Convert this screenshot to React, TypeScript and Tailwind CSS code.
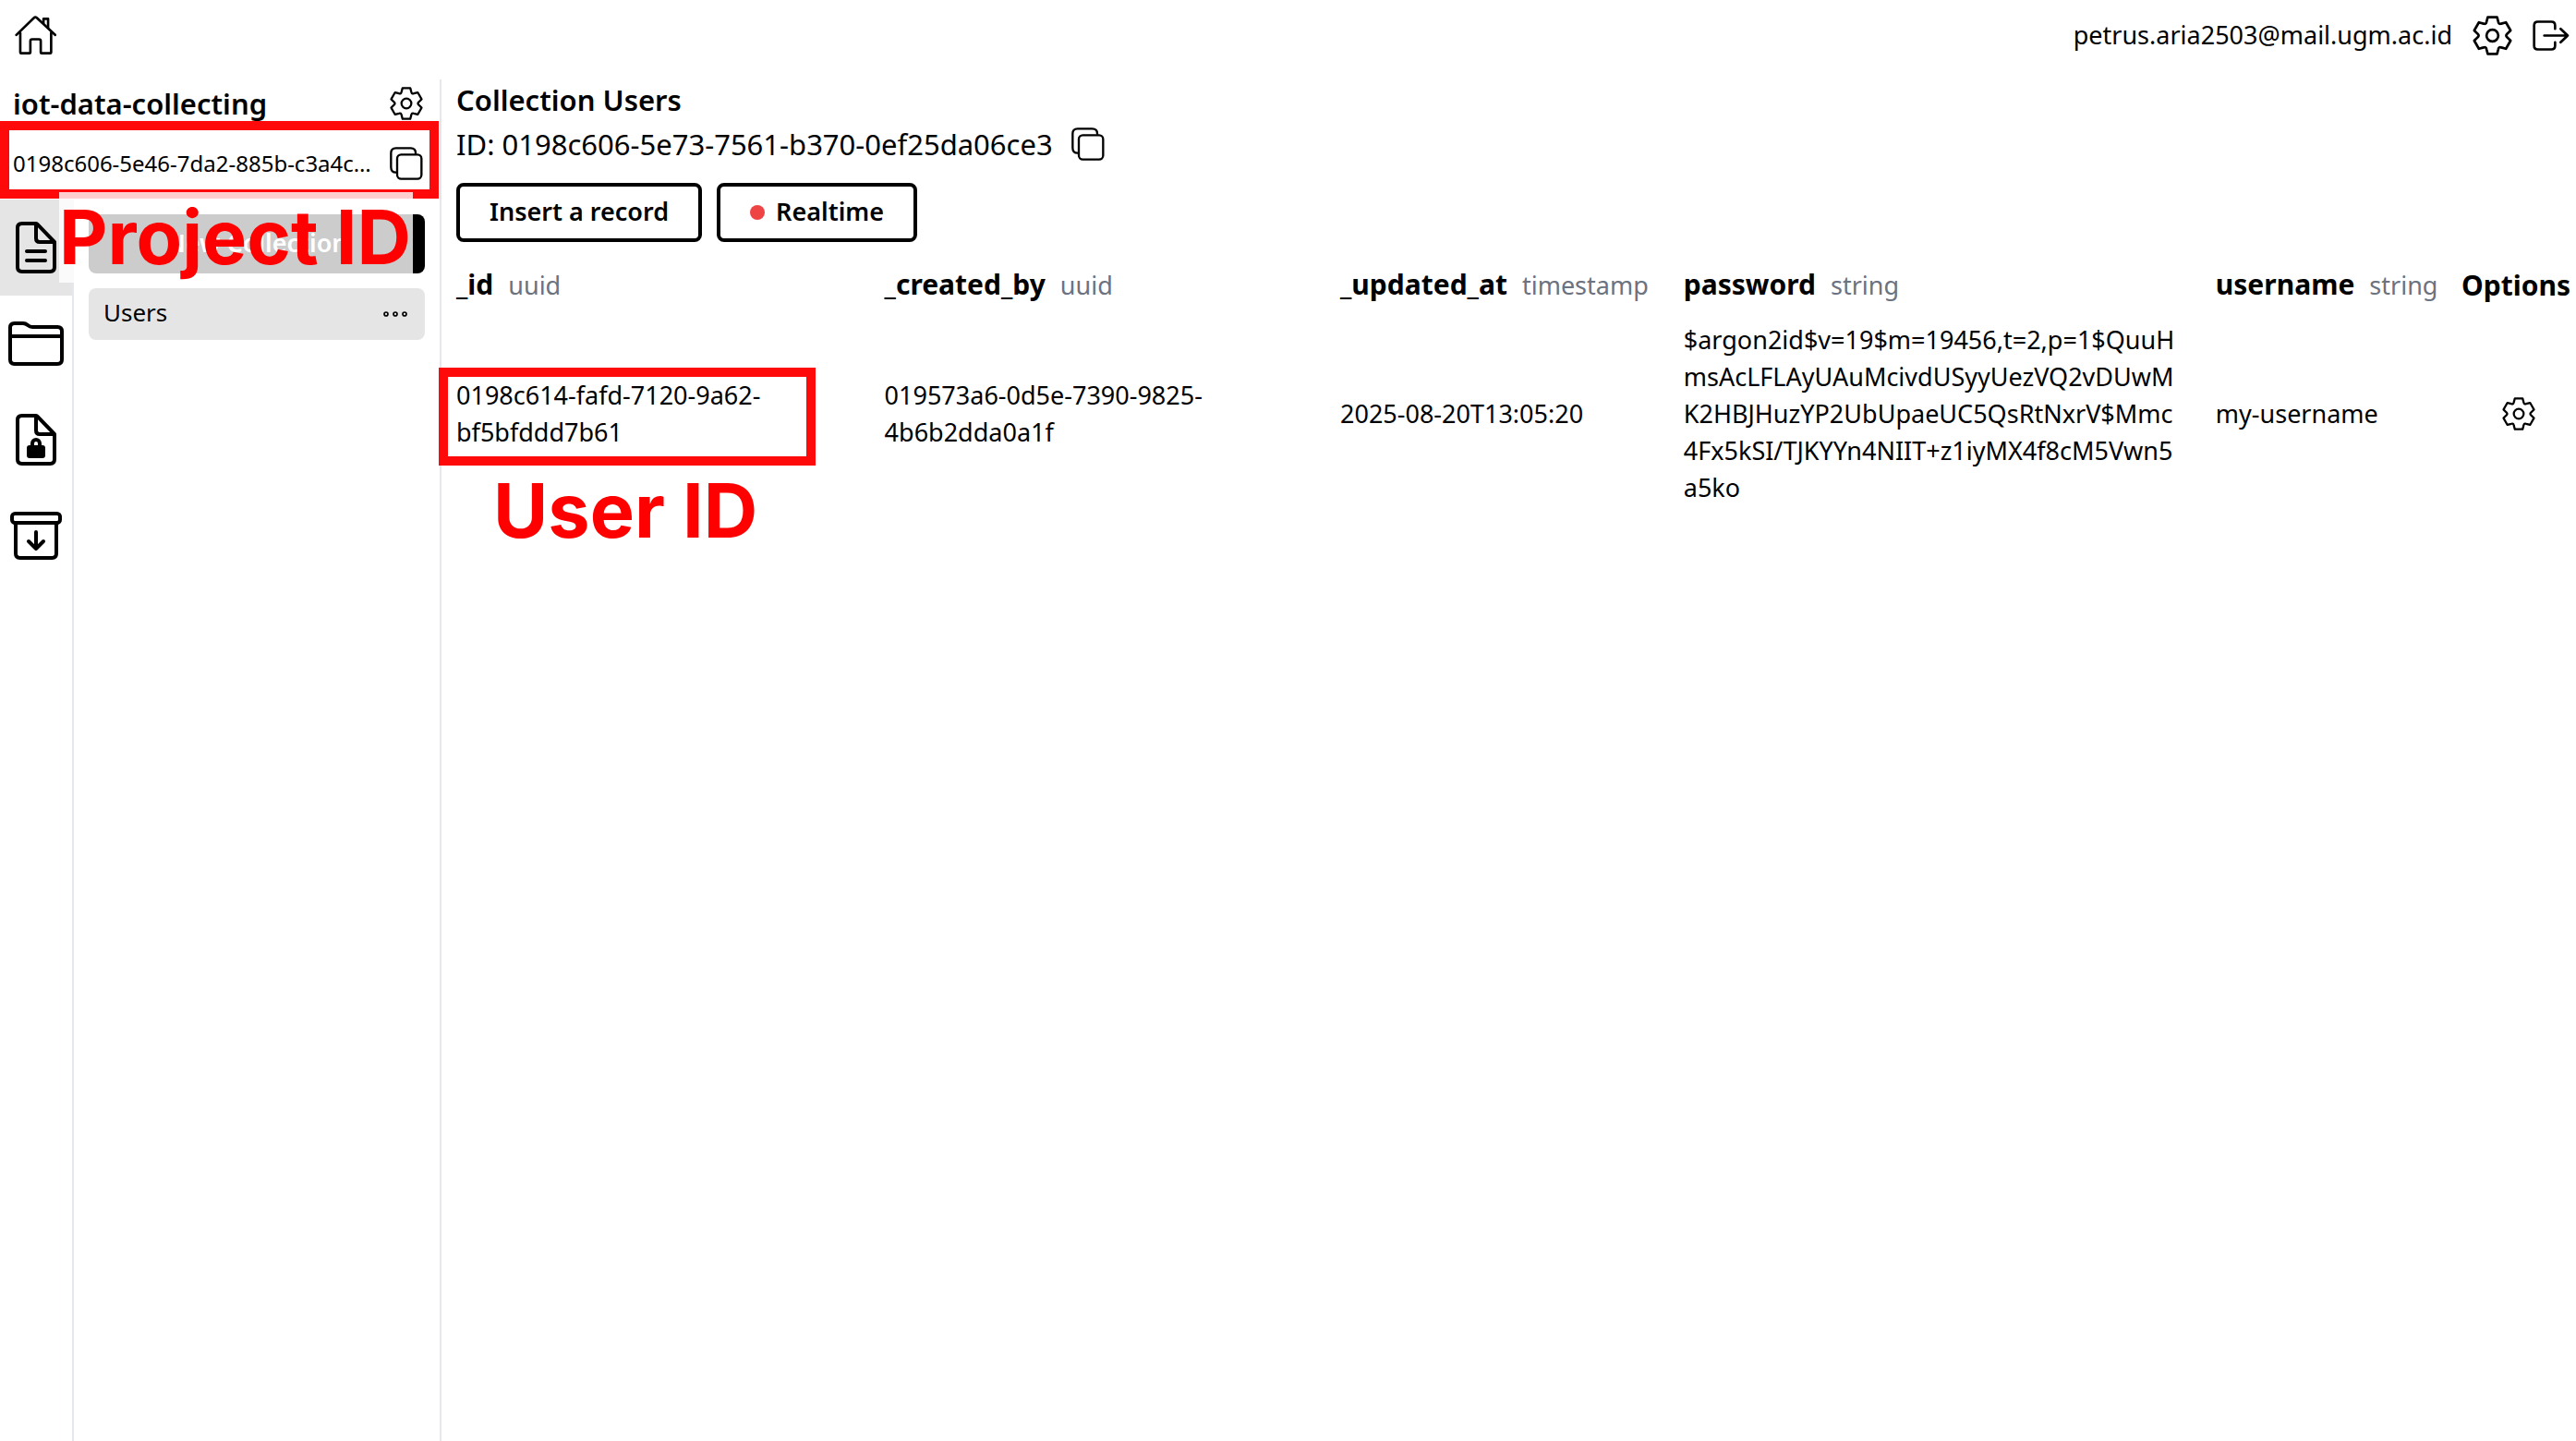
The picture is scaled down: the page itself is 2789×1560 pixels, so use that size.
import React from "react";

type IconProps = { className?: string };

const point = (x: number, y: number, deg: number) => {
  const a = (deg * Math.PI) / 180;
  const px = x * Math.cos(a) - y * Math.sin(a);
  const py = x * Math.sin(a) + y * Math.cos(a);
  return `${px.toFixed(2)} ${py.toFixed(2)}`;
};

// Six-toothed cog outline, one tooth and one rounded valley per 60 degrees.
const gearPath =
  [0, 60, 120, 180, 240, 300]
    .map(
      (d, i) =>
        `${i === 0 ? "M" : "L"}${point(-19, -44, d)}L${point(-15, -59, d)}L${point(15, -59, d)}L${point(19, -44, d)}Q${point(20.5, -35.5, d)} ${point(-19, -44, d + 60)}`
    )
    .join("") + "Z";

function Gear({ className }: IconProps) {
  return (
    <svg viewBox="-64 -64 128 128" fill="none" stroke="currentColor" strokeWidth="8" strokeLinejoin="round" className={className} aria-hidden="true">
      <path d={gearPath} />
      <circle r="19" />
    </svg>
  );
}

function Copy({ className }: IconProps) {
  return (
    <svg viewBox="0 0 108 108" fill="none" stroke="currentColor" strokeWidth="7" strokeLinecap="round" className={className} aria-hidden="true">
      <rect x="24" y="25" width="79" height="79" rx="13" />
      <path d="M20 83Q4 83 4 66V20Q4 4 20 4H68Q84 4 84 20" />
    </svg>
  );
}

function Home({ className }: IconProps) {
  return (
    <svg viewBox="46 50 136 130" fill="none" stroke="currentColor" strokeWidth="8" strokeLinecap="round" strokeLinejoin="round" className={className} aria-hidden="true">
      <path d="M51 113L109 57Q113 53 118 57L178 113" />
      <path d="M64 106V170Q64 173 67 173H94Q97 173 97 170V133Q97 127 103 127H125Q131 127 131 133V170Q131 173 134 173H162Q165 173 165 170V106" />
      <path d="M140 75V60H155V90" />
    </svg>
  );
}

function Logout({ className }: IconProps) {
  return (
    <svg viewBox="246 62 120 104" fill="none" stroke="currentColor" strokeWidth="8" strokeLinecap="round" strokeLinejoin="round" className={className} aria-hidden="true">
      <path d="M319 92V81Q319 69 307 69H263Q251 69 251 81V147Q251 159 263 159H307Q319 159 319 147V136" />
      <path d="M284 114H360M337 92L360 114L337 136" />
    </svg>
  );
}

function FileIcon({ className, locked }: IconProps & { locked?: boolean }) {
  return (
    <svg viewBox="48 60 132 168" fill="none" stroke="currentColor" strokeWidth="12" strokeLinecap="round" strokeLinejoin="round" className={className} aria-hidden="true">
      <path d="M118 68Q116 66 112 66H68Q54 66 54 80V208Q54 222 68 222H160Q174 222 174 208V126Z" />
      <path d="M114 68V114Q114 126 126 126H172" />
      {locked ? (
        <>
          <rect x="84" y="162" width="60" height="42" rx="9" fill="currentColor" stroke="none" />
          <path d="M102 164V156A12 12 0 0 1 126 156V164" />
        </>
      ) : (
        <path d="M84 156H144M84 186H144" />
      )}
    </svg>
  );
}

function Folder({ className }: IconProps) {
  return (
    <svg viewBox="24 384 180 144" fill="none" stroke="currentColor" strokeWidth="12" strokeLinejoin="round" className={className} aria-hidden="true">
      <path d="M30 404Q30 390 44 390H72Q80 390 87 396Q94 402 102 402H184Q198 402 198 416V508Q198 522 184 522H44Q30 522 30 508ZM30 432H198" />
    </svg>
  );
}

function Archive({ className }: IconProps) {
  return (
    <svg viewBox="30 702 168 156" fill="none" stroke="currentColor" strokeWidth="12" strokeLinecap="round" strokeLinejoin="round" className={className} aria-hidden="true">
      <rect x="36" y="708" width="156" height="30" rx="10" />
      <path d="M48 740V838Q48 852 62 852H166Q180 852 180 838V740" />
      <path d="M114 768V822M90 798L114 822L138 798" />
    </svg>
  );
}

function Dots({ className }: IconProps) {
  return (
    <svg viewBox="0 0 78 18" fill="none" stroke="currentColor" strokeWidth="5" className={className} aria-hidden="true">
      <circle cx="9" cy="9" r="6" />
      <circle cx="39" cy="9" r="6" />
      <circle cx="69" cy="9" r="6" />
    </svg>
  );
}

const navItem = "flex h-[104px] items-center justify-center";
const outlineButton = "flex h-16 items-center rounded-lg border-4 border-black pb-1 text-[27px] leading-none font-semibold";

const columns = [
  { name: "_id", type: "uuid", width: "w-[20.2%]" },
  { name: "_created_by", type: "uuid", width: "w-[21.5%]" },
  { name: "_updated_at", type: "timestamp", width: "w-[16.2%]" },
  { name: "password", type: "string", width: "w-[25.1%]" },
  { name: "username", type: "string", width: "w-[11.6%]" },
  { name: "Options", type: "", width: "w-[5.4%]" },
];

const passwordLines = [
  "$argon2id$v=19$m=19456,t=2,p=1$QuuH",
  "msAcLFLAyUAuMcivdUSyyUezVQ2vDUwM",
  "K2HBJHuzYP2UbUpaeUC5QsRtNxrV$Mmc",
  "4Fx5kSI/TJKYYn4NIIT+z1iyMX4f8cM5Vwn5",
  "a5ko",
];

export default function App() {
  return (
    <div className="flex min-h-screen flex-col bg-white font-['Noto_Sans',sans-serif] text-black">
      <header className="flex h-[86px] items-center justify-between pr-[7px] pb-[10px] pl-4">
        <a href="#home" aria-label="Home">
          <Home className="h-[43px] w-[45px]" />
        </a>
        <div className="flex items-center gap-[22px]">
          <span className="text-[27px] leading-10">petrus.aria2503@mail.ugm.ac.id</span>
          <button type="button" aria-label="Account settings">
            <Gear className="size-[43px]" />
          </button>
          <button type="button" aria-label="Log out">
            <Logout className="h-[35px] w-10" />
          </button>
        </div>
      </header>

      <div className="flex flex-1">
        <aside className="flex w-[478px] shrink-0 flex-col border-r-2 border-gray-200 pt-1">
          <div className="flex h-11 items-center justify-between pr-[18px] pl-[14px]">
            <h1 className="text-[31px] leading-[44px] font-semibold">iot-data-collecting</h1>
            <button type="button" aria-label="Project settings">
              <Gear className="size-9" />
            </button>
          </div>
          <div className="relative mt-1 flex h-[78px] items-center justify-between pr-[18px] pl-[14px]">
            <span className="text-[24px] leading-8 whitespace-nowrap">0198c606-5e46-7da2-885b-c3a4c…</span>
            <button type="button" aria-label="Copy project ID">
              <Copy className="size-9" />
            </button>
            <div className="pointer-events-none absolute -top-[7px] right-px bottom-px left-0 border-[10px] border-[#ff0a0a]" />
            <div className="pointer-events-none absolute top-[70px] left-16 z-10 w-[383px] bg-white/80 font-['Inter',sans-serif] text-[81px] leading-[98px] font-bold whitespace-nowrap text-[#ff0000]">
              Project ID
            </div>
          </div>
          <div className="flex flex-1">
            <nav className="flex w-20 flex-col border-r-2 border-gray-200">
              <a href="#collections" aria-label="Collections" className={`${navItem} bg-[#e5e5e5]`}>
                <FileIcon className="h-14 w-11" />
              </a>
              <a href="#buckets" aria-label="Buckets" className={navItem}>
                <Folder className="h-12 w-[60px]" />
              </a>
              <a href="#tokens" aria-label="Tokens" className={navItem}>
                <FileIcon locked className="h-14 w-11" />
              </a>
              <a href="#backups" aria-label="Backups" className={navItem}>
                <Archive className="h-[52px] w-14" />
              </a>
            </nav>
            <div className="flex flex-1 flex-col gap-4 p-4">
              <button type="button" className="h-16 rounded-lg bg-black pb-1 text-[27px] leading-none font-semibold text-white">
                New Collection
              </button>
              <div className="flex h-14 items-center justify-between rounded-lg bg-[#e5e5e5] px-4">
                <a href="#users" className="pb-1 text-[26px] leading-8">Users</a>
                <button type="button" aria-label="Collection options">
                  <Dots className="mr-[3px] h-[6px] w-[26px]" />
                </button>
              </div>
            </div>
          </div>
        </aside>

        <main className="flex min-w-0 flex-1 flex-col pl-4">
          <h2 className="text-[31px] leading-[44px] font-semibold">Collection Users</h2>
          <div className="mt-1 flex items-center gap-5">
            <span className="text-[31px] leading-[44px]">ID: 0198c606-5e73-7561-b370-0ef25da06ce3</span>
            <button type="button" aria-label="Copy collection ID">
              <Copy className="size-9" />
            </button>
          </div>
          <div className="mt-5 flex gap-4">
            <button type="button" className={`${outlineButton} px-8`}>Insert a record</button>
            <button type="button" className={`${outlineButton} gap-3 px-8`}>
              <span className="mt-1 size-4 rounded-full bg-[#ef4444]" />
              Realtime
            </button>
          </div>
          <table className="mt-6 w-full table-fixed border-collapse text-left">
            <thead>
              <tr>
                {columns.map((c) => (
                  <th key={c.name} scope="col" className={`${c.width} pb-[17px] text-[30px] leading-[44px] font-bold whitespace-nowrap`}>
                    {c.name}
                    {c.type && <span className="ml-4 text-[27px] font-normal text-[#6b7280]">{c.type}</span>}
                  </th>
                ))}
              </tr>
            </thead>
            <tbody className="text-[27px] leading-10">
              <tr>
                <td>
                  <div className="relative">
                    0198c614-fafd-7120-9a62-
                    <br />
                    bf5bfddd7b61
                    <div className="pointer-events-none absolute -top-[10px] -bottom-4 -left-[19px] w-[408px] border-[10px] border-[#ff0a0a]" />
                    <div className="pointer-events-none absolute top-[105px] left-10 font-['Inter',sans-serif] text-[81px] leading-none font-bold whitespace-nowrap text-[#ff0000]">
                      User ID
                    </div>
                  </div>
                </td>
                <td>
                  019573a6-0d5e-7390-9825-
                  <br />
                  4b6b2dda0a1f
                </td>
                <td>2025-08-20T13:05:20</td>
                <td className="whitespace-nowrap">
                  {passwordLines.map((line) => (
                    <span key={line} className="block">{line}</span>
                  ))}
                </td>
                <td>my-username</td>
                <td>
                  <button type="button" aria-label="Record options" className="mx-auto block">
                    <Gear className="size-9" />
                  </button>
                </td>
              </tr>
            </tbody>
          </table>
        </main>
      </div>
    </div>
  );
}
